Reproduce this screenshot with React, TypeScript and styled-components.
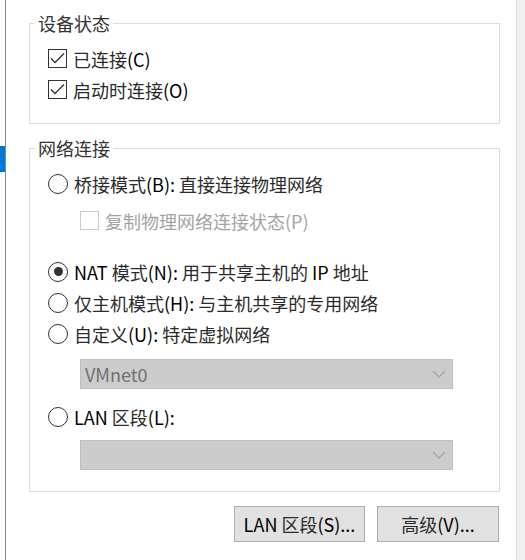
import React from "react";
import styled, { createGlobalStyle } from "styled-components";

const GlobalStyle = createGlobalStyle`
  html, body {
    margin: 0;
    padding: 0;
    background: #ffffff;
  }
  body {
    font-family: "Noto Sans CJK SC", "Noto Sans", sans-serif;
    font-size: 18px;
    color: #2b2b2b;
  }
`;

const Page = styled.div`
  display: flex;
  width: 525px;
  height: 560px;
  overflow: hidden;
  background: #ffffff;
`;

const LeftRail = styled.div`
  width: 5px;
  flex: none;
  border-right: 1px solid #8a8a8a;
`;

const RailMarker = styled.div`
  margin-top: 146px;
  width: 5px;
  height: 26px;
  background: #0078d7;
`;

const Main = styled.div`
  flex: 1;
  padding: 13px 16px 0 23px;
  display: flex;
  flex-direction: column;
`;

const RightStrip = styled.div`
  width: 8px;
  flex: none;
  background: #f0f0f0;
  border-left: 1px solid #e2e2e2;
`;

const Group = styled.fieldset<{ $gapTop?: number }>`
  margin: ${(p) => p.$gapTop ?? 0}px 0 0 0;
  padding: 0;
  min-width: 0;
  border: 1px solid #dcdcdc;
`;

const Legend = styled.legend`
  margin-left: 5px;
  padding: 0 3px;
  line-height: 20px;
  font-size: 18px;
  color: #333333;
`;

const GroupBody = styled.div<{ $bottom: number }>`
  padding: 10px 0 ${(p) => p.$bottom}px 18px;
  display: flex;
  flex-direction: column;
`;

const Row = styled.label<{ $indent?: number; $top?: number; $disabled?: boolean }>`
  display: flex;
  align-items: center;
  gap: 6px;
  height: 31px;
  margin-left: ${(p) => p.$indent ?? 0}px;
  margin-top: ${(p) => p.$top ?? 0}px;
  line-height: 20px;
  white-space: nowrap;
  color: ${(p) => (p.$disabled ? "#a3a3a3" : "#2b2b2b")};
`;

const Strong = styled.span`
  color: #000000;
`;

const CheckBox = styled.span<{ $disabled?: boolean }>`
  box-sizing: border-box;
  width: 19px;
  height: 19px;
  flex: none;
  border: 1px solid ${(p) => (p.$disabled ? "#cccccc" : "#333333")};
  background: #ffffff;
  display: flex;
  align-items: center;
  justify-content: center;
`;

const Radio = styled.span<{ $checked?: boolean }>`
  box-sizing: border-box;
  width: 20px;
  height: 20px;
  flex: none;
  border: 1px solid #333333;
  border-radius: 50%;
  background: #ffffff;
  display: flex;
  align-items: center;
  justify-content: center;

  &::after {
    content: "";
    width: 9px;
    height: 9px;
    border-radius: 50%;
    background: ${(p) => (p.$checked ? "#333333" : "transparent")};
  }
`;

const Combo = styled.div<{ $top: number }>`
  box-sizing: border-box;
  margin: ${(p) => p.$top}px 0 0 32px;
  width: 373px;
  height: 30px;
  background: #cccccc;
  border: 1px solid #bfbfbf;
  display: flex;
  align-items: center;
  justify-content: space-between;
  padding: 0 6px 0 4px;
  color: #6f6f6f;
  line-height: 20px;
`;

const ButtonBar = styled.div`
  display: flex;
  justify-content: flex-end;
  gap: 12px;
  margin-top: 14px;
  margin-right: 1px;
`;

const Button = styled.button<{ $width: number }>`
  box-sizing: border-box;
  width: ${(p) => p.$width}px;
  height: 36px;
  padding: 0;
  background: #e1e1e1;
  border: 1px solid #adadad;
  font-family: "Noto Sans CJK SC", "Noto Sans", sans-serif;
  font-size: 18px;
  line-height: 20px;
  color: #2b2b2b;
  white-space: nowrap;
`;

const Check = () => (
  <svg width="17" height="17" viewBox="0 0 17 17">
    <polyline points="2,8.5 6,12.5 15,3.5" fill="none" stroke="#333333" strokeWidth="1.3" />
  </svg>
);

const Chevron = () => (
  <svg width="14" height="8" viewBox="0 0 14 8">
    <polyline points="1,1 7,7 13,1" fill="none" stroke="#a6a6a6" strokeWidth="1.3" />
  </svg>
);

const App: React.FC = () => {
  return (
    <>
      <GlobalStyle />
      <Page>
        <LeftRail>
          <RailMarker />
        </LeftRail>
        <Main>
          <Group>
            <Legend>设备状态</Legend>
            <GroupBody $bottom={18}>
              <Row>
                <CheckBox>
                  <Check />
                </CheckBox>
                <span>
                  已连接<Strong>(C)</Strong>
                </span>
              </Row>
              <Row>
                <CheckBox>
                  <Check />
                </CheckBox>
                <span>
                  启动时连接<Strong>(O)</Strong>
                </span>
              </Row>
            </GroupBody>
          </Group>

          <Group $gapTop={14}>
            <Legend>网络连接</Legend>
            <GroupBody $bottom={21}>
              <Row>
                <Radio />
                <span>
                  桥接模式<Strong>(B):</Strong> 直接连接物理网络
                </span>
              </Row>
              <Row $indent={32} $top={6} $disabled>
                <CheckBox $disabled />
                <span>复制物理网络连接状态(P)</span>
              </Row>
              <Row $top={20}>
                <Radio $checked />
                <span>
                  <Strong>NAT</Strong> 模式<Strong>(N):</Strong> 用于共享主机的 <Strong>IP</Strong> 地址
                </span>
              </Row>
              <Row>
                <Radio />
                <span>
                  仅主机模式<Strong>(H):</Strong> 与主机共享的专用网络
                </span>
              </Row>
              <Row>
                <Radio />
                <span>
                  自定义<Strong>(U):</Strong> 特定虚拟网络
                </span>
              </Row>
              <Combo $top={10}>
                <span>VMnet0</span>
                <Chevron />
              </Combo>
              <Row $top={12}>
                <Radio />
                <span>
                  <Strong>LAN</Strong> 区段<Strong>(L):</Strong>
                </span>
              </Row>
              <Combo $top={8}>
                <span />
                <Chevron />
              </Combo>
            </GroupBody>
          </Group>

          <ButtonBar>
            <Button $width={131}>
              <Strong>LAN</Strong> 区段<Strong>(S)...</Strong>
            </Button>
            <Button $width={122}>
              高级<Strong>(V)...</Strong>
            </Button>
          </ButtonBar>
        </Main>
        <RightStrip />
      </Page>
    </>
  );
};

export default App;
